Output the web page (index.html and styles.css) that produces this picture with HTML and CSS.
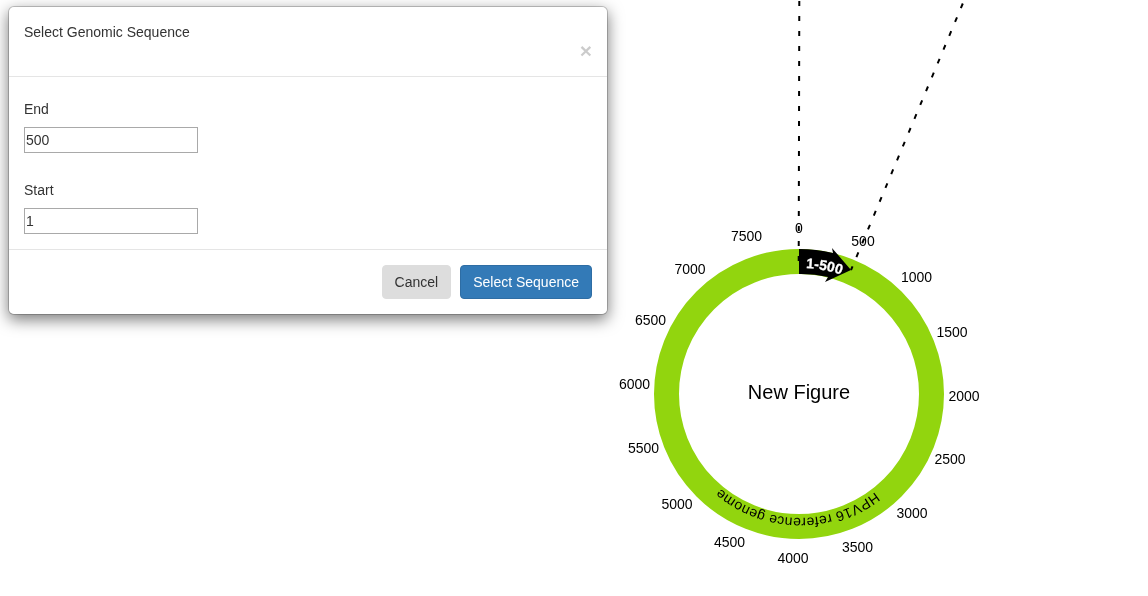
FILE: index.html
```html
<!DOCTYPE html>
<html lang="en">
<head>
<meta charset="utf-8">
<title>Select Genomic Sequence</title>
<link rel="stylesheet" href="styles.css">
</head>
<body>
<main class="page">
  <svg class="plasmid" width="1148" height="596" viewBox="0 0 1148 596">
    <defs>
      <path id="genomeArc" d="M 875 492 A 122 122 0 0 1 693 455"/>
      <path id="regionArc" d="M 806 268 A 126 126 0 0 1 856 281"/>
    </defs>
    <circle class="ring" cx="799" cy="394" r="132.5"/>
    <path class="region" d="M 799 249 A 145 145 0 0 1 833 253 L 832 248 L 851 270 L 825 282 L 828 277 A 120 120 0 0 0 799 274 Z"/>
    <line class="guide" x1="799.3" y1="1" x2="798.7" y2="262"/>
    <line class="guide" x1="962.8" y1="3.5" x2="851" y2="270"/>
    <text class="region-label"><textPath href="#regionArc">1-500</textPath></text>
    <text class="genome-label"><textPath href="#genomeArc">HPV16 reference genome</textPath></text>
    <text class="center-label" x="799" y="399">New Figure</text>
    <g class="ticks">
      <text x="799" y="233">0</text>
      <text x="863" y="246">500</text>
      <text x="916.5" y="282">1000</text>
      <text x="952" y="337">1500</text>
      <text x="964" y="401">2000</text>
      <text x="950" y="464">2500</text>
      <text x="912" y="518">3000</text>
      <text x="857.5" y="552">3500</text>
      <text x="793" y="563">4000</text>
      <text x="729.5" y="547">4500</text>
      <text x="677" y="509">5000</text>
      <text x="643.5" y="453">5500</text>
      <text x="634.5" y="389">6000</text>
      <text x="650.5" y="325">6500</text>
      <text x="690" y="274">7000</text>
      <text x="746.5" y="241">7500</text>
    </g>
  </svg>

  <section class="modal" role="dialog" aria-label="Select Genomic Sequence">
    <header class="modal-header">
      <h4 class="modal-title">Select Genomic Sequence</h4>
      <button class="close" type="button" aria-label="Close">×</button>
    </header>
    <form class="modal-body">
      <div class="field">
        <label class="field-label" for="end">End</label>
        <input class="field-input" id="end" type="text" value="500">
      </div>
      <div class="field">
        <label class="field-label" for="start">Start</label>
        <input class="field-input" id="start" type="text" value="1">
      </div>
    </form>
    <footer class="modal-footer">
      <button class="btn btn-default" type="button">Cancel</button>
      <button class="btn btn-primary" type="button">Select Sequence</button>
    </footer>
  </section>
</main>
</body>
</html>
```
FILE: styles.css
```css
* { box-sizing: border-box; }

html, body {
  margin: 0;
  padding: 0;
  background: #fff;
}

body {
  font-family: "Liberation Sans", Arial, sans-serif;
  font-size: 14px;
  line-height: 20px;
  color: #333;
  overflow: hidden;
}

.page {
  position: relative;
  width: 1148px;
  height: 596px;
}

.plasmid {
  display: block;
  will-change: transform;
}

.guide {
  stroke: #000;
  stroke-width: 2;
  stroke-dasharray: 5 10;
  fill: none;
}

.ring {
  fill: none;
  stroke: #92d50e;
  stroke-width: 25;
}

.region { fill: #000; }

.region-label {
  font-family: "Liberation Sans", Arial, sans-serif;
  font-size: 14px;
  font-weight: 700;
  fill: #fff;
  stroke: #fff;
  stroke-width: 0.3;
}

.genome-label {
  font-family: "Liberation Sans", Arial, sans-serif;
  font-size: 14px;
  letter-spacing: 0.25px;
  fill: #000;
}

.center-label {
  font-family: "Liberation Sans", Arial, sans-serif;
  font-size: 20px;
  text-anchor: middle;
  fill: #000;
}

.ticks text {
  font-family: "Liberation Sans", Arial, sans-serif;
  font-size: 14px;
  text-anchor: middle;
  fill: #000;
}

.modal {
  position: absolute;
  left: 8px;
  top: 6px;
  width: 600px;
  background: #fff;
  border: 1px solid rgba(0, 0, 0, 0.2);
  border-radius: 6px;
  box-shadow: 0 5px 15px rgba(0, 0, 0, 0.5);
  background-clip: padding-box;
  will-change: transform;
}

.modal-header {
  display: flex;
  flex-direction: column;
  height: 70px;
  padding: 15px;
  border-bottom: 1px solid #e5e5e5;
}

.modal-title {
  margin: 0;
  font-size: 14px;
  font-weight: 400;
  line-height: 20px;
}

.close {
  align-self: flex-end;
  margin-top: -2px;
  padding: 0;
  border: 0;
  background: none;
  font-family: inherit;
  font-size: 21px;
  font-weight: 700;
  line-height: 21px;
  color: #000;
  opacity: 0.2;
}

.modal-body {
  display: flex;
  flex-direction: column;
  gap: 27px;
  padding: 22px 15px 15px;
}

.field-label {
  display: block;
  margin-bottom: 8px;
}

.field-input {
  display: block;
  width: 174px;
  height: 26px;
  padding: 1px;
  border: 1px solid #a9a9a9;
  border-radius: 0;
  background: #fff;
  font-family: inherit;
  font-size: 14px;
  color: #333;
}

.modal-footer {
  display: flex;
  justify-content: flex-end;
  gap: 9px;
  padding: 15px;
  border-top: 1px solid #e5e5e5;
}

.btn {
  height: 34px;
  padding: 6px 12px;
  border: 1px solid transparent;
  border-radius: 4px;
  font-family: inherit;
  font-size: 14px;
  line-height: 20px;
}

.btn-default {
  background: #ddd;
  border-color: #ddd;
  color: #333;
}

.btn-primary {
  background: #337ab7;
  border-color: #2e6da4;
  color: #fff;
}
```
